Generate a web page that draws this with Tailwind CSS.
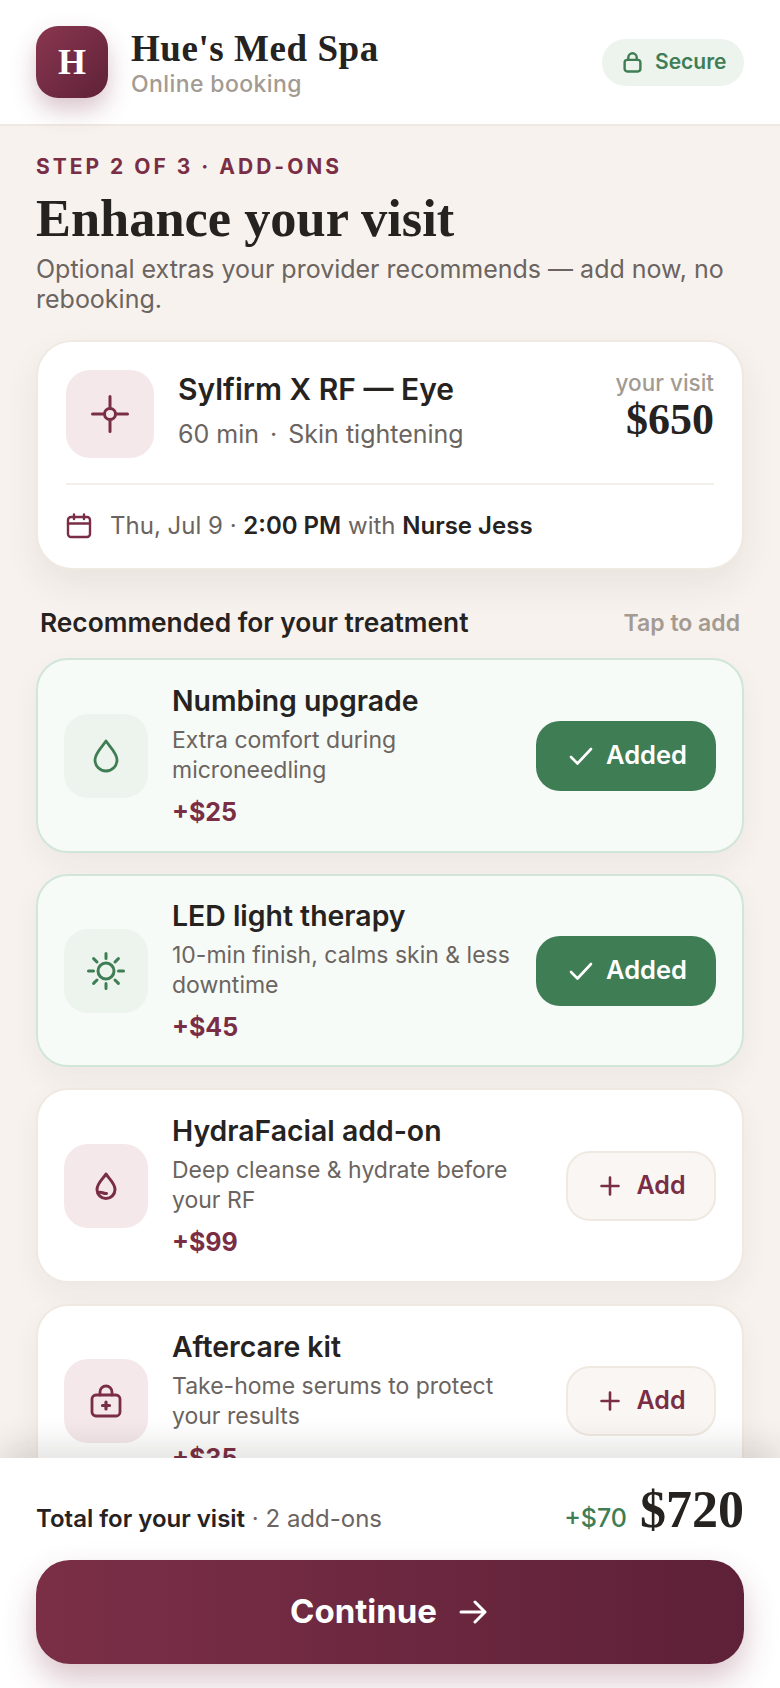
<!doctype html>
<html>
<head>
<meta charset="utf-8">
<script src="https://cdn.jsdelivr.net/npm/@tailwindcss/browser@4"></script>
</head>
<body class="m-0">
<div class="w-[780px] h-[1688px] flex flex-col overflow-hidden bg-[#f7f2ee] font-['Inter',sans-serif] text-[#26221f]">
  <header class="h-[126px] shrink-0 bg-white border-b-2 border-[#efe9e2] px-9 flex items-center justify-between relative z-10">
    <div class="flex items-center gap-[23px]">
      <div class="w-[72px] h-[72px] rounded-[22px] bg-gradient-to-br from-[#8a3650] to-[#5f2238] shadow-[0_12px_24px_rgba(122,46,69,0.28)] flex items-center justify-center text-white font-['Liberation_Serif',serif] font-bold text-[36px]">H</div>
      <div class="flex flex-col">
        <div class="font-['Liberation_Serif',serif] font-bold text-[37px] leading-[44px] tracking-[0.55px] text-[#26221f]">Hue's Med Spa</div>
        <div class="text-[23px] leading-[26px] font-medium text-[#a39b92] tracking-[0.4px]">Online booking</div>
      </div>
    </div>
    <div class="h-[47px] w-[142px] rounded-full bg-[#edf4ee] flex items-center pl-[21px] gap-[13px] text-[#3f7d55] text-[21px] font-semibold">
      <svg width="19" height="21" viewBox="0 0 18 20" fill="none" stroke="#3f7d55" stroke-width="2.3" stroke-linecap="round" stroke-linejoin="round"><rect x="1.5" y="7.5" width="15" height="11" rx="2.5"/><path d="M5 7.5V5.2a4 4 0 0 1 8 0V7.5"/></svg>
      <span>Secure</span>
    </div>
  </header>

  <main class="flex-1 min-h-0 overflow-hidden px-9 pt-[28px]">
    <div class="text-[21px] leading-[26px] font-bold tracking-[3px] text-[#7a2e45]">STEP 2 OF 3 · ADD-ONS</div>
    <h1 class="mt-[8px] font-['Liberation_Serif',serif] font-bold text-[52.4px] leading-[60px] text-[#26221f]">Enhance your visit</h1>
    <p class="mt-[6px] text-[25px] leading-[30px] text-[#6b6460]">Optional extras your provider recommends — add now, no rebooking.</p>

    <section class="mt-[26px] h-[230px] rounded-[36px] bg-white border-2 border-[#efe9e2] shadow-[0_16px_36px_rgba(60,40,30,0.07)] px-[28px] pt-[28px]">
      <div class="flex items-start h-[115px] border-b-2 border-[#f3efea]">
        <div class="w-[88px] h-[88px] shrink-0 rounded-[24px] bg-[#f4e8ea] flex items-center justify-center">
          <svg width="38" height="38" viewBox="0 0 38 38" fill="none" stroke="#7a2e45" stroke-width="3" stroke-linecap="round"><circle cx="19" cy="19" r="5.5"/><path d="M19 1.5V13.5M19 24.5V36.5M1.5 19H13.5M24.5 19H36.5"/></svg>
        </div>
        <div class="ml-[24px] flex-1">
          <div class="text-[30px] leading-[36px] font-semibold mt-[1px]">Sylfirm X RF — Eye</div>
          <div class="mt-[12px] text-[25px] leading-[30px] text-[#6b6460]">60 min <span class="mx-[4px]">·</span> Skin tightening</div>
        </div>
        <div class="text-right">
          <div class="text-[22.5px] leading-[26px] font-medium text-[#a39b92]">your visit</div>
          <div class="font-['Liberation_Serif',serif] font-bold text-[44px] leading-[48px] text-[#26221f]">$650</div>
        </div>
      </div>
      <div class="flex items-center h-[81px] text-[24px]">
        <svg width="26" height="26" viewBox="0 0 26 26" fill="none" stroke="#7a2e45" stroke-width="2.4" stroke-linecap="round" stroke-linejoin="round" class="mr-[18px]"><rect x="2" y="4" width="22" height="20" rx="3"/><path d="M2 10.5H24M8 1.5V6M18 1.5V6"/></svg>
        <span class="text-[#6b6460]">Thu, Jul 9 · <span class="font-semibold text-[#26221f]">2:00 PM</span> with <span class="font-semibold text-[#26221f]">Nurse Jess</span></span>
      </div>
    </section>

    <div class="mt-[37px] mx-1 flex items-center justify-between h-[32px]">
      <div class="text-[26.3px] font-semibold text-[#26221f]">Recommended for your treatment</div>
      <div class="text-[23px] font-semibold text-[#a39b92]">Tap to add</div>
    </div>

    <div class="mt-[19px] flex flex-col gap-[21px]">
      <article class="h-[195px] shrink-0 rounded-[32px] border-2 border-[#d2e5d9] bg-[#f6fbf7] shadow-[0_12px_30px_rgba(60,40,30,0.05)] px-[26px] flex items-center">
        <div class="w-[84px] h-[84px] shrink-0 rounded-[24px] bg-[#edf4ee] flex items-center justify-center">
          <svg width="26" height="34" viewBox="0 0 26 34" fill="none" stroke="#3f7d55" stroke-width="2.8" stroke-linejoin="round"><path d="M13 2C17 8 24 14 24 21a11 11 0 0 1-22 0C2 14 9 8 13 2Z"/></svg>
        </div>
        <div class="ml-6 flex-1 min-w-0">
          <div class="text-[28.4px] leading-[36px] font-semibold">Numbing upgrade</div>
          <div class="mt-[6px] text-[23px] leading-[30px] text-[#6b6460] w-[345px]">Extra comfort during microneedling</div>
          <div class="mt-[11px] text-[25px] leading-[32px] font-bold text-[#7a2e45]">+$25</div>
        </div>
        <div class="w-[180px] h-[70px] shrink-0 rounded-[24px] bg-[#3f7d55] flex items-center justify-center pl-[4px] gap-[13px] text-white text-[25.5px] font-semibold">
          <svg width="24" height="20" viewBox="0 0 24 20" fill="none" stroke="#fff" stroke-width="2.6" stroke-linecap="round" stroke-linejoin="round"><path d="M2 11l6.5 6.5L22 3"/></svg>
          <span>Added</span>
        </div>
      </article>

      <article class="h-[193px] shrink-0 rounded-[32px] border-2 border-[#d2e5d9] bg-[#f6fbf7] shadow-[0_12px_30px_rgba(60,40,30,0.05)] px-[26px] flex items-center">
        <div class="w-[84px] h-[84px] shrink-0 rounded-[24px] bg-[#edf4ee] flex items-center justify-center">
          <svg width="38" height="38" viewBox="0 0 38 38" fill="none" stroke="#3f7d55" stroke-width="3" stroke-linecap="round"><circle cx="19" cy="19" r="8"/><path d="M19 1.5V6.5M19 31.5V36.5M1.5 19H6.5M31.5 19H36.5M6.6 6.6L10 10M28 28L31.4 31.4M6.6 31.4L10 28M28 10L31.4 6.6"/></svg>
        </div>
        <div class="ml-6 flex-1 min-w-0">
          <div class="text-[28.4px] leading-[36px] font-semibold">LED light therapy</div>
          <div class="mt-[6px] text-[23px] leading-[30px] text-[#6b6460] w-[345px]">10-min finish, calms skin &amp; less downtime</div>
          <div class="mt-[11px] text-[25px] leading-[32px] font-bold text-[#7a2e45]">+$45</div>
        </div>
        <div class="w-[180px] h-[70px] shrink-0 rounded-[24px] bg-[#3f7d55] flex items-center justify-center pl-[4px] gap-[13px] text-white text-[25.5px] font-semibold">
          <svg width="24" height="20" viewBox="0 0 24 20" fill="none" stroke="#fff" stroke-width="2.6" stroke-linecap="round" stroke-linejoin="round"><path d="M2 11l6.5 6.5L22 3"/></svg>
          <span>Added</span>
        </div>
      </article>

      <article class="h-[195px] shrink-0 rounded-[32px] border-2 border-[#efe9e2] bg-white shadow-[0_12px_30px_rgba(60,40,30,0.05)] px-[26px] flex items-center">
        <div class="w-[84px] h-[84px] shrink-0 rounded-[24px] bg-[#f4e8ea] flex items-center justify-center">
          <svg width="22" height="28" viewBox="0 0 22 28" fill="none" stroke="#7a2e45" stroke-width="3" stroke-linejoin="round" stroke-linecap="round"><path d="M11 2C14 7 20 11 20 17.5a9 9 0 0 1-18 0C2 11 8 7 11 2Z"/><path d="M3.5 20.5c3-1.5 4.5 1.5 8 1"/></svg>
        </div>
        <div class="ml-6 flex-1 min-w-0">
          <div class="text-[28.4px] leading-[36px] font-semibold">HydraFacial add-on</div>
          <div class="mt-[6px] text-[23px] leading-[30px] text-[#6b6460] w-[345px]">Deep cleanse &amp; hydrate before your RF</div>
          <div class="mt-[11px] text-[25px] leading-[32px] font-bold text-[#7a2e45]">+$99</div>
        </div>
        <div class="w-[150px] h-[70px] shrink-0 rounded-[24px] bg-[#faf6f3] border-2 border-[#efe9e2] flex items-center justify-center pl-[4px] gap-[16px] text-[#7a2e45] text-[25px] font-semibold">
          <svg width="20" height="20" viewBox="0 0 20 20" fill="none" stroke="#7a2e45" stroke-width="2.6" stroke-linecap="round"><path d="M10 1.5V18.5M1.5 10H18.5"/></svg>
          <span>Add</span>
        </div>
      </article>

      <article class="h-[194px] shrink-0 rounded-[32px] border-2 border-[#efe9e2] bg-white shadow-[0_12px_30px_rgba(60,40,30,0.05)] px-[26px] flex items-center">
        <div class="w-[84px] h-[84px] shrink-0 rounded-[24px] bg-[#f4e8ea] flex items-center justify-center">
          <svg width="32" height="34" viewBox="0 0 32 34" fill="none" stroke="#7a2e45" stroke-width="2.8" stroke-linecap="round" stroke-linejoin="round"><rect x="2" y="11" width="28" height="21" rx="4"/><path d="M10 11V8a6 6 0 0 1 12 0v3"/><path d="M16 18v7M12.5 21.5h7" stroke-width="3.2"/></svg>
        </div>
        <div class="ml-6 flex-1 min-w-0">
          <div class="text-[28.4px] leading-[36px] font-semibold">Aftercare kit</div>
          <div class="mt-[6px] text-[23px] leading-[30px] text-[#6b6460] w-[345px]">Take-home serums to protect your results</div>
          <div class="mt-[11px] text-[25px] leading-[32px] font-bold text-[#7a2e45]">+$35</div>
        </div>
        <div class="w-[150px] h-[70px] shrink-0 rounded-[24px] bg-[#faf6f3] border-2 border-[#efe9e2] flex items-center justify-center pl-[4px] gap-[16px] text-[#7a2e45] text-[25px] font-semibold">
          <svg width="20" height="20" viewBox="0 0 20 20" fill="none" stroke="#7a2e45" stroke-width="2.6" stroke-linecap="round"><path d="M10 1.5V18.5M1.5 10H18.5"/></svg>
          <span>Add</span>
        </div>
      </article>
    </div>
  </main>

  <footer class="h-[230px] shrink-0 bg-white px-9 relative z-10 shadow-[0_-14px_28px_rgba(40,30,25,0.12)]">
    <div class="h-[102px] flex items-baseline justify-between pt-[24px]">
      <div class="text-[24px] text-[#6b6460]"><span class="font-semibold text-[#26221f]">Total for your visit</span> · 2 add-ons</div>
      <div class="flex items-baseline gap-[13px]">
        <span class="text-[25px] font-medium text-[#3f7d55]">+$70</span>
        <span class="font-['Liberation_Serif',serif] font-bold text-[52px] leading-[56px] text-[#26221f]">$720</span>
      </div>
    </div>
    <div class="h-[104px] rounded-[34px] bg-gradient-to-r from-[#7b2f47] to-[#5e2138] shadow-[0_16px_32px_rgba(122,46,69,0.28)] flex items-center justify-center pr-[3px] gap-[22px] text-white text-[33px] font-bold">
      <span>Continue</span>
      <svg width="28" height="24" viewBox="0 0 28 24" fill="none" stroke="#fff" stroke-width="3" stroke-linecap="round" stroke-linejoin="round"><path d="M2 12H26M16 2l10 10-10 10"/></svg>
    </div>
  </footer>
</div>
</body>
</html>
